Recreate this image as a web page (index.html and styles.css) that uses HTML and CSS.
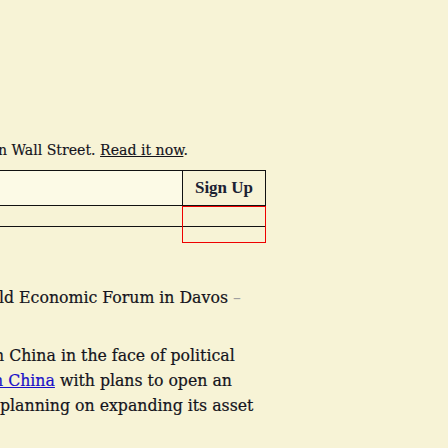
FILE: index.html
```html
<!DOCTYPE html>
<html>
<head>
<meta charset="utf-8">
<link rel="stylesheet" href="styles.css">
</head>
<body>
<div class="page">
  <p class="intro">n Wall Street. <a class="read" href="#">Read it now</a>.</p>
  <div class="signup">
    <div class="field"></div>
    <div class="btn">Sign Up</div>
    <div class="err-row"></div>
    <div class="err-box"></div>
  </div>
  <p class="lede">ld Economic Forum in Davos <span class="dash">–</span></p>
  <div class="body">
    <p class="line l3">n China in the face of political</p>
    <p class="line l4"><a class="link" href="#">n China</a> with plans to open an</p>
    <p class="line l5">planning on expanding its asset</p>
  </div>
</div>
</body>
</html>
```
FILE: styles.css
```css
html, body {
  margin: 0;
  padding: 0;
  background: #f7f3d6;
  overflow: hidden;
}
.page {
  width: 448px;
  height: 448px;
  overflow: hidden;
  padding-top: 1px;
  box-sizing: border-box;
  font-family: "DejaVu Serif Condensed", "DejaVu Serif", serif;
  font-stretch: condensed;
  color: #14141c;
}
.intro {
  margin: 139px 0 0 -2px;
  font-size: 15.7px;
  line-height: 20px;
  white-space: nowrap;
  -webkit-text-stroke: 0.15px #14141c;
}
.read {
  color: #14141c;
  text-decoration: underline;
}
.signup {
  position: relative;
  margin-top: 10px;
  display: grid;
  grid-template-columns: 182px 84px;
  grid-template-rows: 36px 21px;
  width: 266px;
}
.field {
  background: #fcfae6;
  border-top: 1px solid #111;
  border-bottom: 1px solid #111;
}
.btn {
  border: 1px solid #111;
  display: flex;
  align-items: center;
  justify-content: center;
  font-family: "Liberation Serif", serif;
  font-stretch: normal;
  font-weight: bold;
  font-size: 17px;
  color: #1c2233;
}
.err-row {
  grid-column: 1 / 3;
  border-bottom: 1px solid #111;
  margin-top: -1px;
}
.err-box {
  position: absolute;
  left: 182px;
  top: 36px;
  width: 84px;
  height: 37px;
  box-sizing: border-box;
  border: 1px solid #ee0000;
}
.lede {
  margin: 57px 0 0 -1px;
  font-size: 17.5px;
  line-height: 26px;
  white-space: nowrap;
  -webkit-text-stroke: 0.2px #14141c;
}
.dash {
  color: #a0a0a0;
  -webkit-text-stroke: 0;
}
.body {
  margin-top: 33px;
  font-size: 17.5px;
  line-height: 25px;
  white-space: nowrap;
  -webkit-text-stroke: 0.2px #14141c;
}
.line {
  margin: 0;
}
.l3 {
  margin-left: -6px;
}
.l4 {
  margin-left: -7px;
}
.l5 {
  margin-left: 0;
}
.link {
  color: #1a10c8;
  text-decoration: underline;
  -webkit-text-stroke: 0.2px #1a10c8;
}
```
